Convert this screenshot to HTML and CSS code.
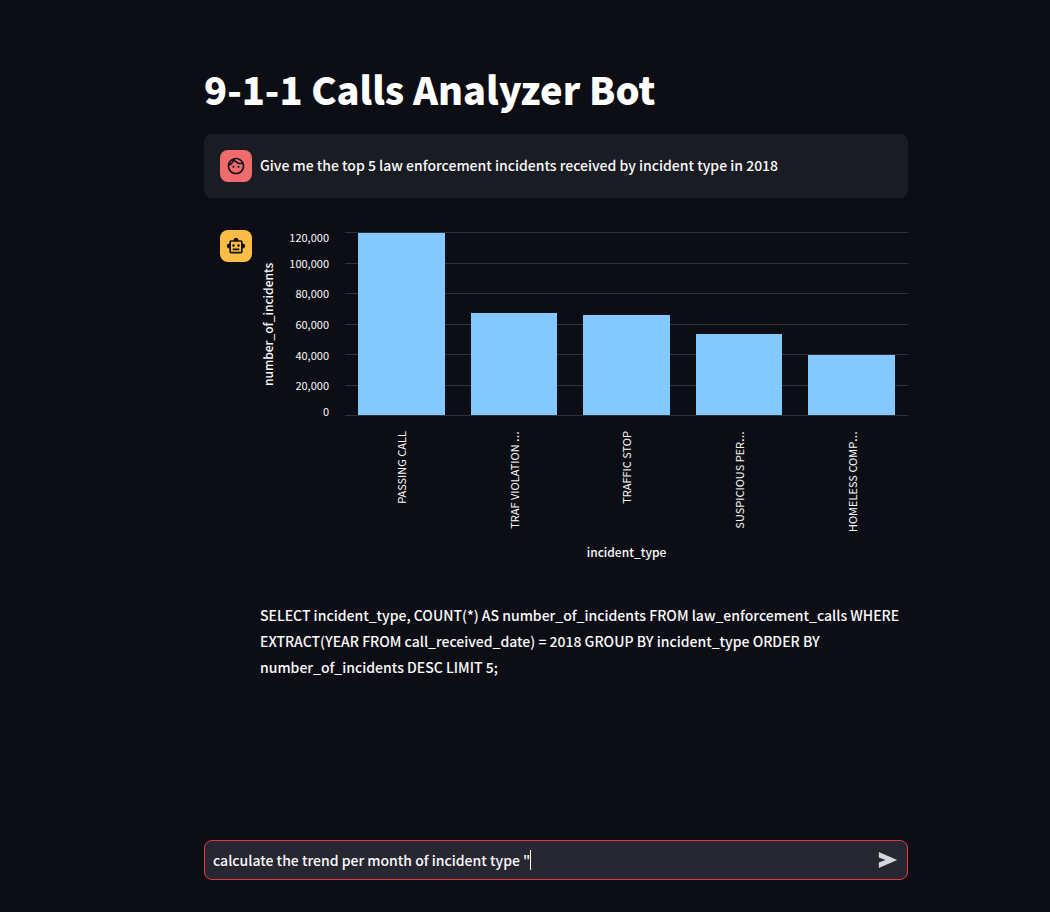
FILE: index.html
```html
<!DOCTYPE html>
<html lang="en">
<head>
<meta charset="utf-8">
<title>9-1-1 Calls Analyzer Bot</title>
<link rel="stylesheet" href="styles.css">
</head>
<body>
<main class="chat">
  <h1 class="title">9-1-1 Calls Analyzer Bot</h1>

  <article class="message message-user">
    <span class="avatar avatar-user">
      <svg class="icon" viewBox="0 0 24 24" aria-hidden="true"><path d="M10.25 13c0 .69-.56 1.25-1.25 1.25S7.75 13.69 7.75 13s.56-1.25 1.25-1.25 1.25.56 1.25 1.25zM15 11.75c-.69 0-1.25.56-1.25 1.25s.56 1.25 1.25 1.25 1.25-.56 1.25-1.25-.56-1.25-1.25-1.25zm7 .25c0 5.52-4.48 10-10 10S2 17.52 2 12 6.48 2 12 2s10 4.48 10 10zM10.66 4.12C12.06 6.44 14.6 8 17.5 8c.46 0 .91-.05 1.34-.12C17.44 5.56 14.9 4 12 4c-.46 0-.91.05-1.34.12zM4.42 9.47a8.046 8.046 0 0 0 3.66-4.44 8.046 8.046 0 0 0-3.66 4.44zM20 12c0-.78-.12-1.53-.33-2.24-.7.15-1.42.24-2.17.24a10 10 0 0 1-7.76-3.69A10.016 10.016 0 0 1 4 11.86c.01.04 0 .09 0 .14 0 4.41 3.59 8 8 8s8-3.59 8-8z"/></svg>
    </span>
    <p class="text">Give me the top 5 law enforcement incidents received by incident type in 2018</p>
  </article>

  <article class="message">
    <span class="avatar avatar-bot">
      <svg class="icon" viewBox="0 0 24 24" aria-hidden="true"><path d="M20 9V7c0-1.100-.9-2-2-2h-3c0-1.660-1.340-3-3-3S9 3.340 9 5H6c-1.100 0-2 .9-2 2v2c-1.660 0-3 1.340-3 3s1.340 3 3 3v4c0 1.100.9 2 2 2h12c1.100 0 2-.9 2-2v-4c1.660 0 3-1.340 3-3s-1.340-3-3-3zm-2 10H6V7h12v12zm-9-6c-.83 0-1.500-.67-1.500-1.500S8.170 10 9 10s1.500.67 1.500 1.500S9.830 13 9 13zm7.500-1.500c0 .83-.67 1.500-1.500 1.500s-1.500-.67-1.500-1.500.67-1.500 1.500-1.500 1.500.67 1.500 1.500zM8 15h8v2H8v-2z"/></svg>
    </span>
    <div class="answer">
      <figure class="chart">
        <span class="axis-title axis-title-y">number_of_incidents</span>
        <div class="ticks-y">
          <span>120,000</span><span>100,000</span><span>80,000</span><span>60,000</span><span>40,000</span><span>20,000</span><span>0</span>
        </div>
        <div class="plot">
          <div class="lines"><i></i><i></i><i></i><i></i><i></i><i></i><i></i></div>
          <div class="bars">
            <span class="bar" style="height: 99.5%"></span>
            <span class="bar" style="height: 56%"></span>
            <span class="bar" style="height: 54.5%"></span>
            <span class="bar" style="height: 44%"></span>
            <span class="bar" style="height: 33%"></span>
          </div>
        </div>
        <div class="ticks-x">
          <span>PASSING CALL</span>
          <span>TRAF VIOLATION <b>…</b></span>
          <span>TRAFFIC STOP</span>
          <span>SUSPICIOUS PER<b>…</b></span>
          <span>HOMELESS COMP<b>…</b></span>
        </div>
        <figcaption class="axis-title axis-title-x">incident_type</figcaption>
      </figure>
      <p class="text">SELECT incident_type, COUNT(*) AS number_of_incidents FROM law_enforcement_calls WHERE EXTRACT(YEAR FROM call_received_date) = 2018 GROUP BY incident_type ORDER BY number_of_incidents DESC LIMIT 5;</p>
    </div>
  </article>

  <form class="composer">
    <label class="field">
      <input class="prompt" type="text" aria-label="Your message" value="calculate the trend per month of incident type &quot;">
      <span class="caret"></span>
    </label>
    <button class="send" type="button" aria-label="Send">
      <svg class="icon" viewBox="0 0 24 24" aria-hidden="true"><path d="M1 2.500v6.500l8 3-8 3v6.500L23 12z"/></svg>
    </button>
  </form>
</main>
</body>
</html>
```
FILE: styles.css
```css
* {
  box-sizing: border-box;
}

body {
  margin: 0;
  background: #0d0e15;
  color: #fafafa;
  font-family: "Noto Sans CJK SC", "Noto Sans", sans-serif;
  font-size: 14px;
  font-weight: 500;
  line-height: 26px;
}

.chat {
  display: flex;
  flex-direction: column;
  min-height: 100vh;
  padding: 64px 142px 32px 204px;
}

.title {
  margin: 0 0 20px;
  color: #fff;
  font-size: 38px;
  font-weight: 900;
  line-height: 50px;
}

.message {
  display: flex;
  gap: 8px;
  padding: 16px 0 16px 16px;
  margin-bottom: 16px;
}

.message-user {
  background: #1a1c23;
  border-radius: 8px;
}

.text {
  margin: 0;
}

.message-user .text {
  padding: 2px 0 4px;
}

.avatar {
  display: flex;
  flex: none;
  align-items: center;
  justify-content: center;
  width: 32px;
  height: 32px;
  border-radius: 8px;
  color: #14141c;
}

.avatar-user {
  background: #f06b6b;
}

.avatar-bot {
  background: #fbbd45;
}

.icon {
  display: block;
  width: 20px;
  height: 20px;
  fill: currentColor;
}

.answer {
  flex: 1;
  min-width: 0;
}

.chart {
  display: grid;
  grid-template-columns: 15px 54px minmax(0, 1fr);
  grid-template-rows: 184px 128px 16px;
  margin: 2px 0 42px;
}

.axis-title {
  font-size: 12px;
  line-height: 16px;
  text-align: center;
}

.axis-title-y {
  writing-mode: vertical-rl;
  transform: rotate(180deg);
}

.axis-title-x {
  grid-column: 3;
  margin-left: 16px;
}

.ticks-y {
  display: grid;
  grid-template-rows: 1fr 2fr 2fr 2fr 2fr 2fr 1fr;
  align-items: center;
  font-size: 11px;
  font-weight: 400;
  line-height: 10px;
  text-align: right;
}

.ticks-y :first-child {
  align-self: start;
}

.ticks-y :last-child {
  align-self: end;
}

.plot {
  display: grid;
  margin-left: 16px;
}

.lines,
.bars {
  grid-area: 1 / 1;
}

.lines {
  display: flex;
  flex-direction: column;
  justify-content: space-between;
}

.lines i {
  height: 1px;
  background: #30323a;
}

.bars {
  display: grid;
  grid-template-columns: repeat(5, 1fr);
  align-items: end;
  justify-items: center;
  padding-bottom: 1px;
}

.bar {
  width: 77%;
  background: #83c9ff;
}

.ticks-x {
  display: grid;
  grid-column: 3;
  grid-template-columns: repeat(5, 1fr);
  justify-items: center;
  align-items: start;
  margin-left: 16px;
  padding-top: 15px;
  font-size: 11px;
  font-weight: 400;
  line-height: 16px;
}

.ticks-x span {
  writing-mode: vertical-rl;
  text-orientation: sideways;
  transform: rotate(180deg);
  white-space: nowrap;
}

.ticks-x b {
  font-family: "Open Sans", sans-serif;
  font-size: 14px;
  font-weight: 400;
}

.composer {
  display: flex;
  align-items: center;
  height: 40px;
  margin-top: auto;
  padding: 0 9px 0 8px;
  border: 1px solid #e8393f;
  border-radius: 8px;
  background: #262730;
}

.field {
  display: flex;
  flex: 1;
  align-items: center;
  min-width: 0;
}

.prompt {
  field-sizing: content;
  max-width: 100%;
  padding: 0;
  border: 0;
  outline: 0;
  background: none;
  color: #fafafa;
  font: inherit;
}

.caret {
  width: 1px;
  height: 20px;
  background: #fff;
}

.send {
  padding: 0;
  border: 0;
  background: none;
  color: #d5d8e0;
}
```
